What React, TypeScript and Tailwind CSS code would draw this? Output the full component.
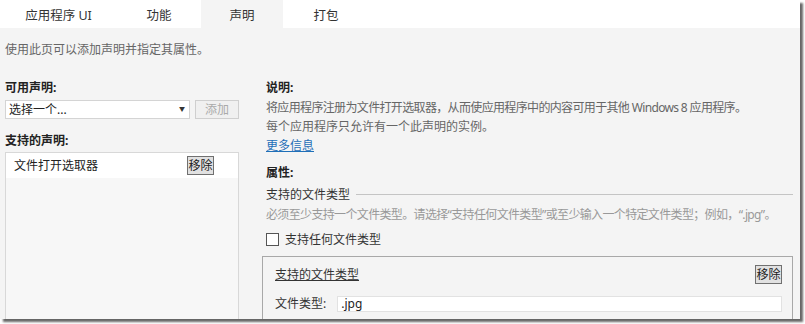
import React from "react";

const tabs = [
  { label: "应用程序 UI", w: "w-[117px]" },
  { label: "功能", w: "w-[84px]" },
  { label: "声明", w: "w-[82px]", active: true },
  { label: "打包", w: "w-[86px]" },
];

function RemoveButton() {
  return (
    <button className="h-[19px] w-[27px] border border-[#707070] bg-[#e1e1e1] text-[12px] leading-[17px] text-[#222]">
      移除
    </button>
  );
}

export default function App() {
  return (
    <div
      className="w-[805px] h-[324px] bg-white text-[12px] text-[#444]"
      style={{ fontFamily: '"Noto Sans", "Noto Sans CJK SC", sans-serif' }}
    >
      <div className="w-[800px] h-[319px] bg-[#f4f4f4] shadow-[3px_3px_2px_rgba(0,0,0,0.6)] overflow-hidden flex flex-col">
        {/* tab strip */}
        <div className="h-[28px] bg-white flex shrink-0">
          {tabs.map((t) => (
            <div
              key={t.label}
              className={`${t.w} flex items-center justify-center text-[12.5px] text-[#333] pt-[4px] ${
                t.active ? "bg-[#f4f4f4]" : ""
              }`}
            >
              {t.label}
            </div>
          ))}
        </div>

        <div className="flex-1 flex flex-col pl-[5px]">
          <div className="mt-[12px] leading-[20px] text-[#666]">使用此页可以添加声明并指定其属性。</div>

          <div className="mt-[18px] flex flex-1">
            {/* left column */}
            <div className="w-[234px] flex flex-col">
              <div className="leading-[20px] font-bold text-[#222]">可用声明:</div>
              <div className="mt-[2px] flex gap-[5px]">
                <div className="w-[185px] h-[19px] bg-white border border-[#d4d4d4] flex items-center justify-between pl-[3px] pr-[4px] text-[#222]">
                  <span>选择一个...</span>
                  <span className="text-[6px] text-[#333]">▼</span>
                </div>
                <button className="w-[44px] h-[19px] border border-[#cfcfcf] bg-[#f0f0f0] text-[#aaa] text-[12px] leading-[17px]">
                  添加
                </button>
              </div>
              <div className="mt-[12px] leading-[20px] font-bold text-[#222]">支持的声明:</div>
              <div className="mt-[1px] flex-1 border border-[#d8d8d8] border-b-0 bg-[#f7f7f7]">
                <div className="h-[25px] bg-white flex items-center justify-between pl-[8px] pr-[24px] text-[#222]">
                  <span>文件打开选取器</span>
                  <RemoveButton />
                </div>
              </div>
            </div>

            {/* right column */}
            <div className="ml-[23px] w-[531px] flex flex-col">
              <div className="pl-[4px] leading-[19px]">
                <div className="font-bold text-[#222]">说明:</div>
                <div className="mt-[1px] text-[#666] whitespace-nowrap tracking-[-0.65px]">
                  将应用程序注册为文件打开选取器，从而使应用程序中的内容可用于其他 Windows 8 应用程序。
                </div>
                <div className="text-[#666]">每个应用程序只允许有一个此声明的实例。</div>
                <div className="text-[#1f6fb8] underline">更多信息</div>
                <div className="mt-[8px] font-bold text-[#222]">属性:</div>
                <div className="mt-[3px] flex items-center gap-[6px] text-[#333]">
                  <span>支持的文件类型</span>
                  <div className="flex-1 h-px bg-[#c4c4c4]" />
                </div>
                <div className="mt-[1px] text-[#999] whitespace-nowrap tracking-[-0.65px]">
                  必须至少支持一个文件类型。请选择“支持任何文件类型”或至少输入一个特定文件类型；例如，“.jpg”。
                </div>
                <div className="mt-[6px] flex items-center gap-[6px] text-[#333]">
                  <span className="w-[13px] h-[13px] border border-[#555] bg-white" />
                  <span>支持任何文件类型</span>
                </div>
              </div>
              <div className="mt-[7px] flex-1 border border-[#a8a8a8] border-b-0 pl-[12px] pr-[10px] pt-[8px]">
                <div className="flex items-center justify-between">
                  <span className="underline text-[#333]">支持的文件类型</span>
                  <RemoveButton />
                </div>
                <div className="mt-[11px] flex items-center gap-[11px]">
                  <span className="text-[#333]">文件类型:</span>
                  <div className="flex-1 h-[16px] bg-white border border-[#e2e2e2] pl-[3px] leading-[14px] text-[#222]">
                    .jpg
                  </div>
                </div>
              </div>
            </div>
          </div>
        </div>
      </div>
    </div>
  );
}
